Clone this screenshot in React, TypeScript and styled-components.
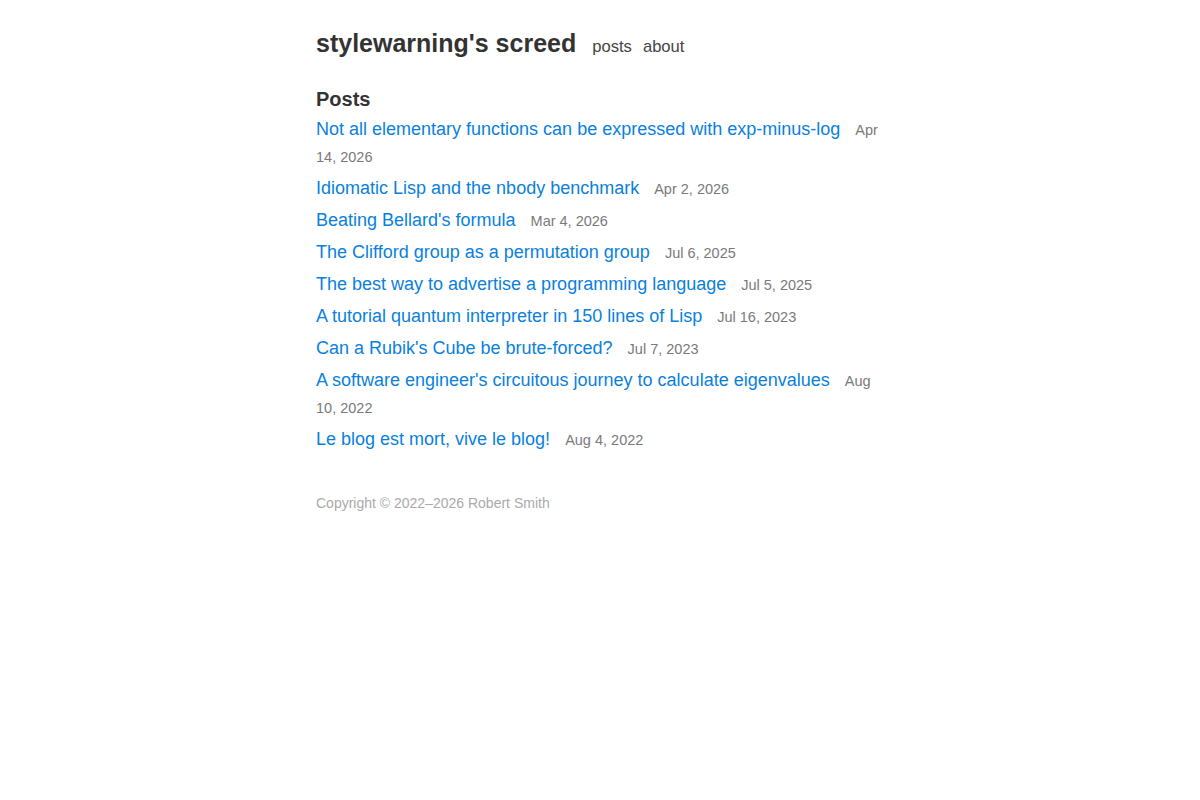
import React, { ReactElement } from 'react'
import styled, { createGlobalStyle } from 'styled-components';

interface Post {
  title: string,
  date: string
}

const posts: Post[] = [
  { title: 'Not all elementary functions can be expressed with exp-minus-log', date: 'Apr 14, 2026' },
  { title: 'Idiomatic Lisp and the nbody benchmark', date: 'Apr 2, 2026' },
  { title: "Beating Bellard's formula", date: 'Mar 4, 2026' },
  { title: 'The Clifford group as a permutation group', date: 'Jul 6, 2025' },
  { title: 'The best way to advertise a programming language', date: 'Jul 5, 2025' },
  { title: 'A tutorial quantum interpreter in 150 lines of Lisp', date: 'Jul 16, 2023' },
  { title: "Can a Rubik's Cube be brute-forced?", date: 'Jul 7, 2023' },
  { title: "A software engineer's circuitous journey to calculate eigenvalues", date: 'Aug 10, 2022' },
  { title: 'Le blog est mort, vive le blog!', date: 'Aug 4, 2022' },
];

const GlobalStyle = createGlobalStyle`
  body {
    margin: 0;
    background: #fff;
    font-family: "Liberation Sans", Arial, sans-serif;
    color: #333;
  }
`;

const Page = styled.div`
  width: 568px;
  margin: 0 auto;
  padding-top: 29px;
`;

const Header = styled.header`
  display: flex;
  align-items: baseline;
`;

const SiteTitle = styled.a`
  font-size: 25px;
  font-weight: bold;
  color: #333;
  text-decoration: none;
  margin-right: 16px;
`;

const NavLink = styled.a`
  font-size: 16.6px;
  color: #444;
  text-decoration: none;
  margin-right: 11px;
`;

const SectionTitle = styled.h2`
  font-size: 20px;
  font-weight: bold;
  margin: 30px 0 5px;
  color: #333;
`;

const PostList = styled.ul`
  list-style: none;
  margin: 0;
  padding: 0;
`;

const PostItem = styled.li`
  line-height: 27px;
  margin-bottom: 5px;
`;

const PostLink = styled.a`
  font-size: 18px;
  color: #0a7fe0;
  text-decoration: none;
`;

// the date sits on the link's line without stretching it
const PostDate = styled.span`
  font-size: 14.5px;
  line-height: 1;
  color: #7a7a7a;
  margin-left: 15px;
`;

const Footer = styled.footer`
  margin-top: 42px;
  font-size: 14px;
  color: #aaa;
`;

export default function App(): ReactElement {
  return (
    <Page>
      <GlobalStyle />
      <Header>
        <SiteTitle href="#">stylewarning's screed</SiteTitle>
        <NavLink href="#">posts</NavLink>
        <NavLink href="#">about</NavLink>
      </Header>
      <SectionTitle>Posts</SectionTitle>
      <PostList>
        {posts.map(({ title, date }) => (
          <PostItem key={title}>
            <PostLink href="#">{title}</PostLink>
            <PostDate>{date}</PostDate>
          </PostItem>
        ))}
      </PostList>
      <Footer>Copyright © 2022–2026 Robert Smith</Footer>
    </Page>
  )
}
